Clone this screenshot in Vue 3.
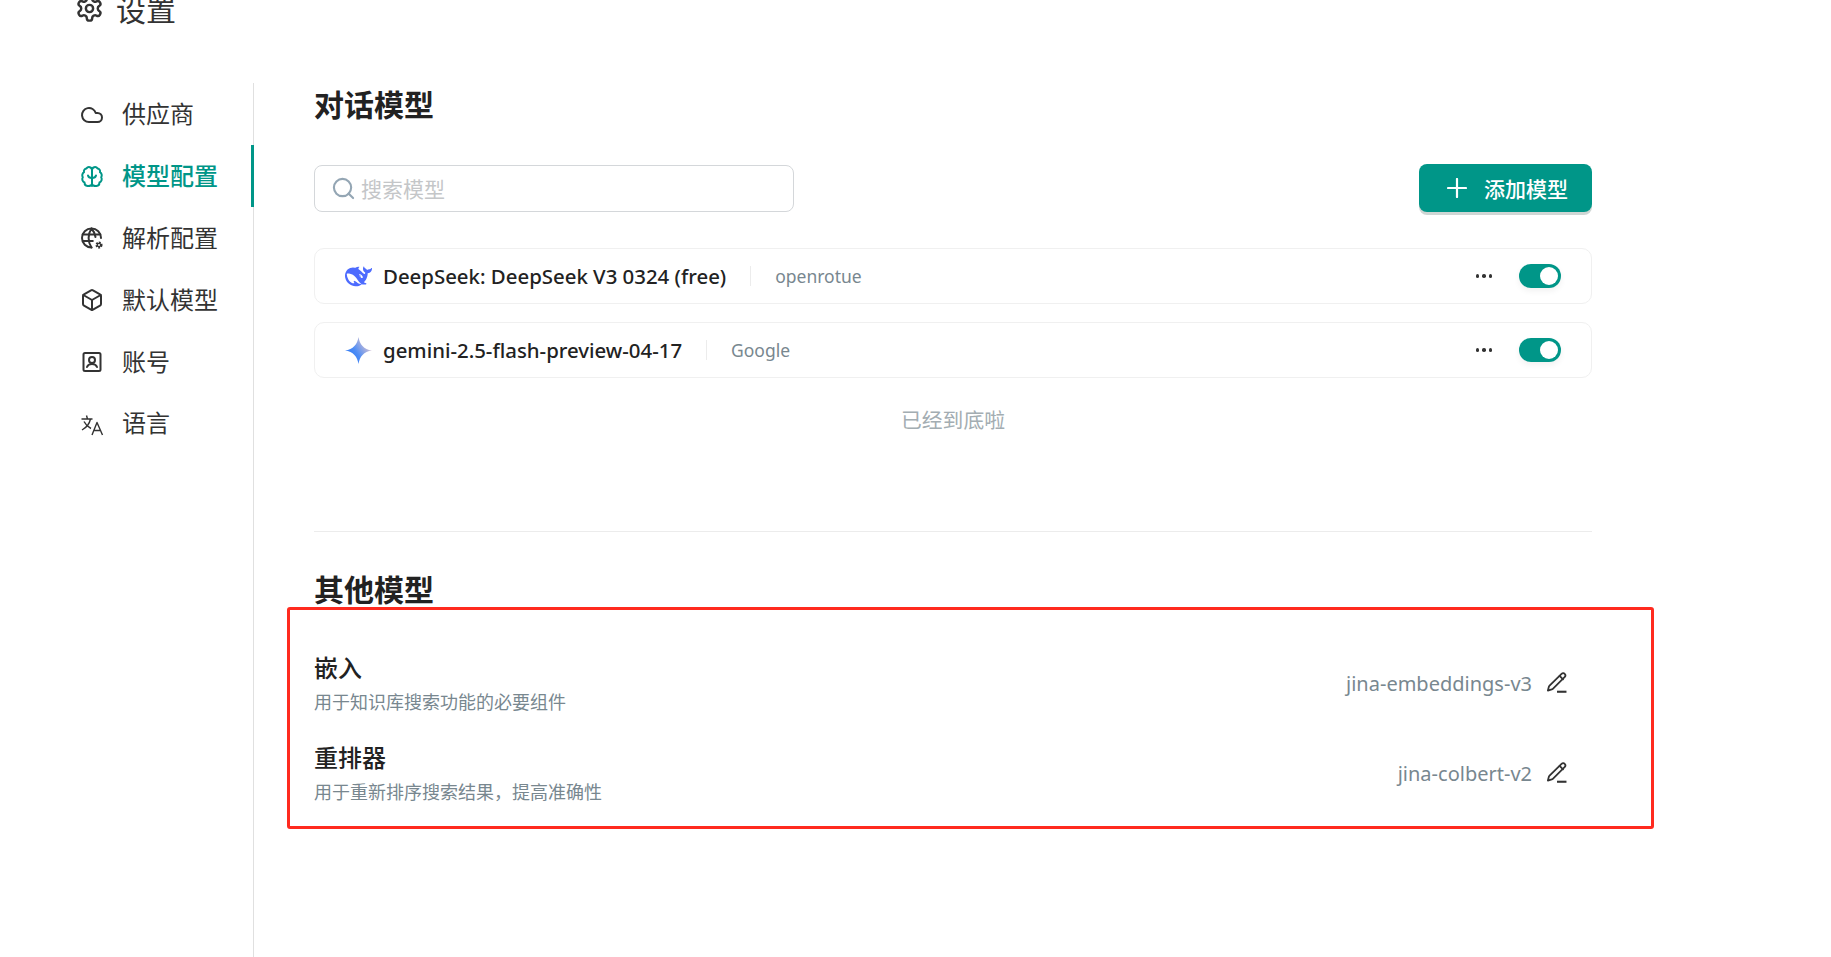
<script setup>
const navItems = [
  { label: '供应商', icon: 'cloud' },
  { label: '模型配置', icon: 'brain', active: true },
  { label: '解析配置', icon: 'globe' },
  { label: '默认模型', icon: 'box' },
  { label: '账号', icon: 'user' },
  { label: '语言', icon: 'lang' }
]
const models = [
  { name: 'DeepSeek: DeepSeek V3 0324 (free)', provider: 'openrotue', logo: 'deepseek' },
  { name: 'gemini-2.5-flash-preview-04-17', provider: 'Google', logo: 'gemini' }
]
const others = [
  { title: '嵌入', desc: '用于知识库搜索功能的必要组件', value: 'jina-embeddings-v3' },
  { title: '重排器', desc: '用于重新排序搜索结果，提高准确性', value: 'jina-colbert-v2' }
]
</script>

<template>
  <div class="page">
    <header class="head">
      <svg class="gear" viewBox="0 0 24 24" fill="none" stroke="currentColor" stroke-width="2" stroke-linecap="round" stroke-linejoin="round">
        <path d="M12.22 2h-.44a2 2 0 0 0-2 2v.18a2 2 0 0 1-1 1.73l-.43.25a2 2 0 0 1-2 0l-.15-.08a2 2 0 0 0-2.73.73l-.22.38a2 2 0 0 0 .73 2.73l.15.1a2 2 0 0 1 1 1.72v.51a2 2 0 0 1-1 1.74l-.15.09a2 2 0 0 0-.73 2.73l.22.38a2 2 0 0 0 2.73.73l.15-.08a2 2 0 0 1 2 0l.43.25a2 2 0 0 1 1 1.73V20a2 2 0 0 0 2 2h.44a2 2 0 0 0 2-2v-.18a2 2 0 0 1 1-1.73l.43-.25a2 2 0 0 1 2 0l.15.08a2 2 0 0 0 2.73-.73l.22-.39a2 2 0 0 0-.73-2.73l-.15-.08a2 2 0 0 1-1-1.74v-.5a2 2 0 0 1 1-1.74l.15-.09a2 2 0 0 0 .73-2.73l-.22-.38a2 2 0 0 0-2.73-.73l-.15.08a2 2 0 0 1-2 0l-.43-.25a2 2 0 0 1-1-1.73V4a2 2 0 0 0-2-2z" />
        <circle cx="12" cy="12" r="3" />
      </svg>
      <span class="head-title">设置</span>
    </header>

    <div class="body">
      <nav class="side">
        <a v-for="item in navItems" :key="item.label" class="nav-item" :class="{ active: item.active }">
          <svg class="nav-icon" viewBox="0 0 24 24" fill="none" stroke="currentColor" stroke-width="2" stroke-linecap="round" stroke-linejoin="round">
            <path v-if="item.icon === 'cloud'" d="M17.5 19H9a7 7 0 1 1 6.71-9h1.79a4.5 4.5 0 1 1 0 9Z" />
            <template v-else-if="item.icon === 'brain'">
              <path d="M12 5a3 3 0 0 0-5.500-1.600A3 3 0 0 0 4 7.200a3.600 3.600 0 0 0-1.200 5A3.700 3.700 0 0 0 4.500 17.500a3.300 3.300 0 0 0 3 3.400c2.400.3 4.500-.5 4.500-2.500Z" />
              <path d="M12 5a3 3 0 0 1 5.500-1.600A3 3 0 0 1 20 7.200a3.600 3.600 0 0 1 1.200 5 3.700 3.700 0 0 1-1.700 5.300 3.300 3.300 0 0 1-3 3.400c-2.400.3-4.500-.5-4.500-2.500Z" />
              <path d="M12 5v16M12 13c-2 0-3.500-.5-4-2.500M12 13c2 0 3.500-.5 4-2.500" />
            </template>
            <template v-else-if="item.icon === 'globe'">
              <path d="M21 12a9.500 9.500 0 1 0-9.500 9.500" />
              <path d="M2.800 8.500h17.400M2.800 15h10M11.500 2.500a17 17 0 0 0 0 19M11.500 2.500a17 17 0 0 1 4 8.500" />
              <circle cx="19" cy="19" r="2.300" fill="currentColor" stroke-width="2.500" stroke-linecap="butt" stroke-dasharray="1.500 0.900" />
              <circle cx="19" cy="19" r="1" fill="#fff" stroke="none" />
            </template>
            <template v-else-if="item.icon === 'box'">
              <path d="M21 8a2 2 0 0 0-1-1.730l-7-4a2 2 0 0 0-2 0l-7 4A2 2 0 0 0 3 8v8a2 2 0 0 0 1 1.730l7 4a2 2 0 0 0 2 0l7-4A2 2 0 0 0 21 16Z" />
              <path d="m3.300 7 8.700 5 8.700-5M12 22V12" />
            </template>
            <template v-else-if="item.icon === 'user'">
              <rect x="3.500" y="3" width="17" height="18" rx="1.500" />
              <circle cx="12" cy="10" r="3" />
              <path d="M7 17c.8-2 2.700-3 5-3s4.200 1 5 3" />
            </template>
            <template v-else>
              <path stroke-width="1.400" stroke-linecap="butt" d="M1.500 7h11M6.500 3.500l1 3.500M10.500 7C9.500 11.500 6.500 15.500 2 18M4 9.500c1.500 3 4 5.500 7 7" />
              <path stroke-width="1.400" stroke-linecap="butt" d="m12 23 5-12.500L22.500 23M14 18.500h7" />
            </template>
          </svg>
          <span class="nav-label">{{ item.label }}</span>
        </a>
      </nav>

      <main class="main">
        <h2 class="title">对话模型</h2>

        <div class="toolbar">
          <div class="search">
            <svg class="search-icon" viewBox="0 0 24 24" fill="none" stroke="currentColor" stroke-width="2.200" stroke-linecap="round">
              <circle cx="11" cy="11" r="9" />
              <path d="m22 22-4.800-4.800" />
            </svg>
            <span class="placeholder">搜索模型</span>
          </div>
          <button class="add">
            <svg class="plus" viewBox="0 0 20 20" fill="none" stroke="currentColor" stroke-width="2.200" stroke-linecap="round">
              <path d="M10 1v18M1 10h18" />
            </svg>
            <span>添加模型</span>
          </button>
        </div>

        <div class="list">
          <div v-for="m in models" :key="m.name" class="row">
            <svg v-if="m.logo === 'deepseek'" class="logo" viewBox="0 0 24 24">
              <path fill="#4d6bfe" d="M23.748 4.482c-.254-.124-.364.113-.512.234-.051.039-.094.09-.137.136-.372.397-.806.657-1.373.626-.829-.046-1.537.214-2.163.848-.133-.782-.575-1.248-1.247-1.548-.352-.156-.708-.311-.955-.65-.172-.241-.219-.51-.305-.774-.055-.16-.11-.323-.293-.35-.2-.031-.278.136-.356.276-.313.572-.434 1.202-.422 1.84.027 1.436.633 2.58 1.838 3.393.137.093.172.187.129.323-.082.28-.18.552-.266.833-.055.179-.137.217-.329.14a5.526 5.526 0 01-1.736-1.18c-.857-.828-1.631-1.742-2.597-2.458a11.365 11.365 0 00-.689-.471c-.985-.957.13-1.743.388-1.836.27-.098.093-.432-.779-.428-.872.004-1.67.295-2.687.684a3.055 3.055 0 01-.465.137 9.597 9.597 0 00-2.883-.102c-1.885.21-3.39 1.102-4.497 2.623C.082 8.606-.231 10.684.152 12.850c.403 2.284 1.569 4.175 3.360 5.653 1.858 1.533 3.997 2.284 6.438 2.140 1.482-.085 3.133-.284 4.994-1.860.47.234.962.327 1.780.397.63.059 1.236-.03 1.705-.128.735-.156.684-.837.419-.961-2.155-1.004-1.682-.595-2.113-.926 1.096-1.296 2.746-2.642 3.392-7.003.05-.347.007-.565 0-.845-.004-.17.035-.237.23-.256a4.173 4.173 0 001.545-.475c1.396-.763 1.960-2.015 2.093-3.517.02-.23-.004-.467-.247-.588zM11.581 18c-2.089-1.642-3.102-2.183-3.520-2.160-.392.024-.321.471-.235.763.09.288.207.486.371.739.114.167.192.416-.113.603-.673.416-1.842-.14-1.897-.167-1.361-.802-2.500-1.860-3.301-3.307-.774-1.393-1.224-2.887-1.298-4.482-.02-.386.093-.522.477-.592a4.696 4.696 0 011.529-.039c2.132.312 3.946 1.265 5.468 2.774.868.860 1.525 1.887 2.202 2.891.72 1.066 1.494 2.082 2.480 2.914.348.292.625.514.891.677-.802.09-2.140.11-3.054-.614zm1-6.440a.306.306 0 01.415-.287.302.302 0 01.2.288.306.306 0 01-.31.307.303.303 0 01-.304-.308zm3.110 1.596c-.2.081-.399.151-.59.160a1.245 1.245 0 01-.798-.254c-.274-.23-.47-.358-.552-.758a1.730 1.730 0 01.016-.588c.07-.327-.008-.537-.239-.727-.187-.156-.426-.199-.688-.199a.559.559 0 01-.254-.078c-.11-.054-.2-.19-.114-.358.028-.054.16-.186.192-.21.356-.202.767-.136 1.146.016.352.144.618.408 1.001.782.391.451.462.576.685.914.176.265.336.537.445.848.067.195-.019.354-.25.452z" />
            </svg>
            <svg v-else class="logo" viewBox="0 0 28 28">
              <defs>
                <linearGradient id="gem" x1="0" y1="0.900" x2="1" y2="0.250">
                  <stop offset="0" stop-color="#1c6ef5" />
                  <stop offset="0.450" stop-color="#4f8df5" />
                  <stop offset="1" stop-color="#f3cdcb" />
                </linearGradient>
              </defs>
              <path fill="url(#gem)" d="M14 0c1.100 7.500 5.500 12.900 14 14-8.500 1.100-12.900 6.500-14 14-1.100-7.500-5.500-12.900-14-14 8.500-1.100 12.900-6.500 14-14Z" />
            </svg>
            <span class="model-name">{{ m.name }}</span>
            <span class="sep"></span>
            <span class="provider">{{ m.provider }}</span>
            <span class="dots"><i></i><i></i><i></i></span>
            <span class="toggle"><span class="knob"></span></span>
          </div>
        </div>

        <p class="end">已经到底啦</p>
        <hr class="rule" />

        <h2 class="title other-title">其他模型</h2>

        <div class="marked">
          <div v-for="o in others" :key="o.title" class="other-row">
            <div class="other-text">
              <div class="other-name">{{ o.title }}</div>
              <div class="other-desc">{{ o.desc }}</div>
            </div>
            <span class="other-value">{{ o.value }}</span>
            <svg class="pencil" viewBox="0 0 20 20" fill="none" stroke="#333" stroke-width="1.700" stroke-linecap="round" stroke-linejoin="round">
              <path d="M14.800 1.800c1-.9 2.300-.8 3 0 .8.800.8 2.100-.1 3L6.500 16c-.3.300-.6.500-1 .6l-3.700 1.100 1-3.800c.1-.4.300-.7.600-1Z" />
              <path d="M13 3.800l3.200 3.200" />
              <path stroke-width="2" stroke-linecap="butt" d="M10.500 18.800h9" />
            </svg>
          </div>
        </div>
      </main>
    </div>
  </div>
</template>

<style>
html, body { margin: 0; background: #fff; overflow: hidden; }
</style>

<style scoped>
.page {
  width: 1831px;
  height: 957px;
  overflow: hidden;
  font-family: "Noto Sans", "Noto Sans CJK SC", sans-serif;
  color: #333;
  background: #fff;
}
.head {
  display: flex;
  align-items: center;
  gap: 12px;
  height: 44px;
  margin-top: -14px;
  padding-left: 75px;
}
.gear { width: 29px; height: 29px; }
.head-title { font-size: 30px; }
.body { display: flex; margin-top: 53px; height: 874px; }
.side {
  width: 253px;
  flex: none;
  border-right: 1px solid #e0e0e0;
  box-sizing: content-box;
}
.nav-item {
  display: flex;
  align-items: center;
  gap: 18px;
  height: 61.800px;
  padding-left: 80px;
  font-size: 24px;
  margin-right: -1px;
  box-sizing: border-box;
}
.nav-label { margin-top: -2px; }
.nav-item.active {
  color: #009688;
  font-weight: 500;
  border-right: 3px solid #009688;
}
.nav-icon { width: 24px; height: 24px; flex: none; margin-top: 2px; }
.main { width: 1278px; margin-left: 60px; }
.title {
  margin: 0;
  font-size: 30px;
  font-weight: 700;
  line-height: 44px;
  color: #222;
}
.toolbar {
  display: flex;
  justify-content: space-between;
  align-items: center;
  margin-top: 37px;
}
.search {
  display: flex;
  align-items: center;
  gap: 6px;
  width: 480px;
  height: 47px;
  box-sizing: border-box;
  padding-left: 17px;
  border: 1px solid #d4d7da;
  border-radius: 8px;
}
.search-icon { width: 23px; height: 23px; color: #94a6b4; }
.placeholder { font-size: 21px; color: #c4c6c8; }
.add {
  display: flex;
  align-items: center;
  gap: 17px;
  width: 173px;
  height: 48px;
  padding: 0 0 0 28px;
  border: 0;
  border-radius: 8px;
  background: #009688;
  color: #fff;
  font: inherit;
  font-size: 21px;
  font-weight: 500;
  box-shadow: 0 3px 0 #cfd6d4;
}
.plus { width: 20px; height: 20px; }
.list {
  display: flex;
  flex-direction: column;
  gap: 18px;
  margin-top: 36px;
}
.row {
  display: flex;
  align-items: center;
  height: 56px;
  box-sizing: border-box;
  padding-left: 30px;
  border: 1px solid #f0f0f0;
  border-radius: 10px;
}
.logo { width: 27px; height: 27px; flex: none; margin-right: 11px; }
.model-name { font-size: 20.400px; color: #222; font-weight: 500; }
.sep { width: 1px; height: 20px; background: #ececec; margin: 0 24px; }
.provider { font-size: 17.500px; color: #78878f; }
.dots { display: flex; gap: 3px; margin-left: auto; margin-right: 27px; }
.dots i { width: 3.500px; height: 3.500px; border-radius: 50%; background: #333; }
.toggle {
  display: flex;
  align-items: center;
  justify-content: flex-end;
  width: 42px;
  height: 24px;
  margin-right: 30px;
  padding-right: 3px;
  box-sizing: border-box;
  border-radius: 12px;
  background: #009688;
  box-shadow: 0 3px 6px rgba(0, 0, 0, 0.06);
}
.knob { width: 18px; height: 18px; border-radius: 50%; background: #fff; }
.end {
  margin: 27px 0 0;
  text-align: center;
  font-size: 20.800px;
  line-height: 30px;
  color: #a3adb2;
}
.rule { margin: 96px 0 0; border: 0; border-top: 1px solid #ececec; }
.other-title { margin-top: 41px; line-height: 34px; }
.marked {
  width: 1367px;
  height: 222px;
  box-sizing: border-box;
  margin: 0 0 0 -27px;
  padding: 29px 84px 0 24px;
  border: 3px solid #ff2a1f;
  border-radius: 3px;
}
.other-row {
  display: flex;
  align-items: center;
  height: 90px;
}
.other-text { flex: 1; }
.other-name { font-size: 24px; font-weight: 500; line-height: 34px; color: #222; }
.other-desc { font-size: 18px; line-height: 30px; color: #78878f; margin-top: 2px; }
.other-value { font-size: 20px; color: #78878f; margin-top: -1px; }
.pencil { width: 21px; height: 21px; margin-left: 14px; margin-top: -4px; }
</style>
